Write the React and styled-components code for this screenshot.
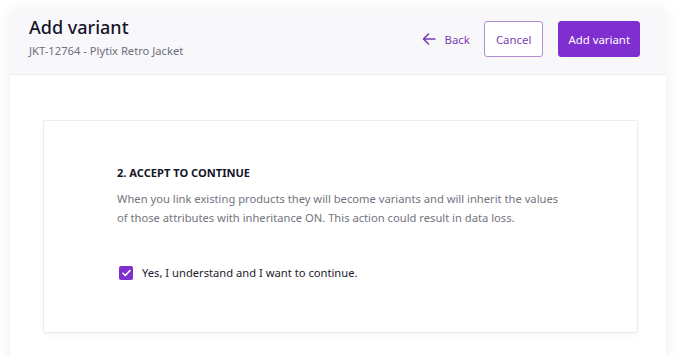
import React from "react";
import styled, { createGlobalStyle } from "styled-components";

const Global = createGlobalStyle`
  html, body { margin: 0; padding: 0; background: #ffffff; }
  body { font-family: "Noto Sans", "Open Sans", sans-serif; -webkit-font-smoothing: antialiased; }
  * { box-sizing: border-box; }
`;

const Page = styled.div`
  width: 688px;
  height: 356px;
  padding: 10px 22px 0 10px;
  overflow: hidden;
`;

const Panel = styled.div`
  width: 656px;
  height: 360px;
  background: #ffffff;
  box-shadow: 0 0 14px rgba(20, 20, 40, 0.07);
  display: flex;
  flex-direction: column;
`;

const Header = styled.header`
  height: 65px;
  flex: none;
  background: #f8f8fb;
  border-bottom: 1px solid #ececf0;
  display: flex;
  align-items: center;
  justify-content: space-between;
  padding: 0 26px 6px 19px;
`;

const TitleBlock = styled.div`
  display: flex;
  flex-direction: column;
  gap: 4px;
  margin-bottom: 4px;
`;

const Title = styled.h1`
  margin: 0;
  font-size: 18px;
  line-height: 24px;
  font-weight: 500;
  color: #16142a;
`;

const Subtitle = styled.div`
  font-size: 11.2px;
  line-height: 16px;
  color: #6e6e7e;
`;

const Actions = styled.div`
  display: flex;
  align-items: center;
`;

const BackLink = styled.button`
  display: flex;
  align-items: center;
  gap: 9px;
  background: none;
  border: none;
  padding: 0;
  margin-right: 14px;
  font: inherit;
  font-size: 11.4px;
  color: #7a3cb4;
  cursor: pointer;
`;

const Button = styled.button`
  height: 36px;
  padding: 0 ${(p) => (p.$primary ? "9px" : "11px")};
  margin-left: ${(p) => (p.$primary ? "15px" : "0")};
  border-radius: 3px;
  font: inherit;
  font-size: 11.4px;
  cursor: pointer;
  border: 1px solid ${(p) => (p.$primary ? "#7f2fcf" : "#b18fd4")};
  background: ${(p) => (p.$primary ? "#7f2fcf" : "#ffffff")};
  color: ${(p) => (p.$primary ? "#ffffff" : "#7a3cb4")};
`;

const Body = styled.div`
  padding: 45px 28px 0 33px;
`;

const Card = styled.section`
  height: 213px;
  border: 1px solid #ececee;
  border-radius: 2px;
  background: #ffffff;
  box-shadow: 0 3px 6px rgba(0, 0, 0, 0.03);
  padding: 44px 40px 0 73px;
`;

const Heading = styled.h2`
  margin: 0 0 8px;
  font-size: 11.1px;
  line-height: 16px;
  font-weight: 700;
  color: #16142a;
`;

const Text = styled.p`
  margin: 0;
  max-width: 450px;
  font-size: 11.2px;
  line-height: 19px;
  color: #74747e;
`;

const CheckRow = styled.label`
  display: flex;
  align-items: center;
  gap: 9px;
  margin-top: 38px;
  margin-left: 2px;
  font-size: 11.2px;
  color: #1c1a2c;
`;

const Box = styled.span`
  width: 14px;
  height: 14px;
  border-radius: 2px;
  background: #7f2fcf;
  display: flex;
  align-items: center;
  justify-content: center;
`;

export default function App() {
  return (
    <>
      <Global />
      <Page>
        <Panel>
          <Header>
            <TitleBlock>
              <Title>Add variant</Title>
              <Subtitle>JKT-12764 - Plytix Retro Jacket</Subtitle>
            </TitleBlock>
            <Actions>
              <BackLink>
                <svg width="14" height="12" viewBox="0 0 14 12" fill="none">
                  <path d="M13 6H1.5M6.5 1L1.5 6l5 5" stroke="#7a3cb4" strokeWidth="1.6" strokeLinecap="round" strokeLinejoin="round" />
                </svg>
                Back
              </BackLink>
              <Button>Cancel</Button>
              <Button $primary>Add variant</Button>
            </Actions>
          </Header>
          <Body>
            <Card>
              <Heading>2. ACCEPT TO CONTINUE</Heading>
              <Text>
                When you link existing products they will become variants and will inherit the values of those attributes with inheritance ON. This action could result in data loss.
              </Text>
              <CheckRow>
                <Box>
                  <svg width="9" height="8" viewBox="0 0 9 8" fill="none">
                    <path d="M1 4.2l2.3 2.3L8 1.5" stroke="#fff" strokeWidth="1.6" strokeLinecap="round" strokeLinejoin="round" />
                  </svg>
                </Box>
                Yes, I understand and I want to continue.
              </CheckRow>
            </Card>
          </Body>
        </Panel>
      </Page>
    </>
  );
}
